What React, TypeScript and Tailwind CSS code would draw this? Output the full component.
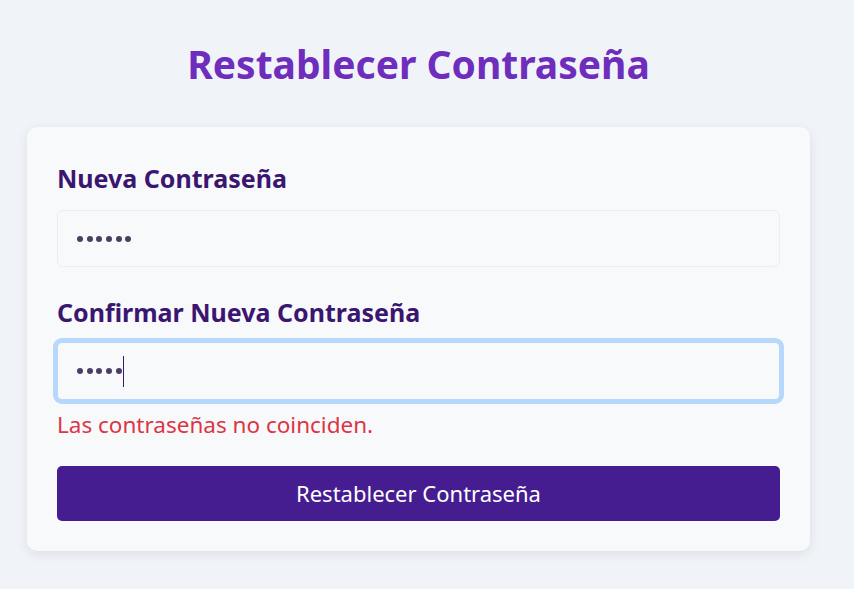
import React from "react";

const font = { fontFamily: '"Noto Sans", "Open Sans", sans-serif' };

function Dots({ count }: { count: number }) {
	return (
		<div className="flex items-center gap-[3.7px]">
			{Array.from({ length: count }).map((_, i) => (
				<span key={i} className="h-[6px] w-[6px] rounded-full bg-[#4a3f63]" />
			))}
		</div>
	);
}

export default function App() {
	return (
		<div className="min-h-screen bg-[#f0f4f8] pl-[27px] pr-[44px] pt-[36px]" style={font}>
			<h1 className="text-center text-[39px] leading-[56px] font-bold text-[#6f2dbd]">
				Restablecer Contraseña
			</h1>
			<div className="mt-[35px] rounded-[10px] bg-[#f8f9fb] px-[30px] pt-[30px] pb-[30px] shadow-[0_3px_12px_rgba(0,0,0,0.09)]">
				{/* Nueva contraseña */}
				<label className="block text-[25px] leading-[42px] font-bold text-[#3b1670]">
					Nueva Contraseña
				</label>
				<div className="mt-[11px] flex h-[57px] items-center rounded-[6px] border border-[#eceef2] bg-[#f8f9fb] px-[19px]">
					<Dots count={6} />
				</div>

				{/* Confirmar */}
				<label className="mt-[24px] block text-[25px] leading-[42px] font-bold text-[#3b1670]">
					Confirmar Nueva Contraseña
				</label>
				<div className="mt-[9px] flex h-[58px] items-center rounded-[5px] border border-[#b7d8fb] bg-[#f8f9fb] px-[19px] shadow-[0_0_0_4px_#b7d8fb]">
					<Dots count={5} />
					<span className="ml-[1px] h-[31px] w-px bg-[#3b1670]" />
				</div>

				<p className="mt-[10px] text-[22.5px] leading-[30px] text-[#dc3545]">
					Las contraseñas no coinciden.
				</p>
				<button className="mt-[26px] h-[55px] w-full rounded-[5px] bg-[#461d91] text-[22px] text-white">
					Restablecer Contraseña
				</button>
			</div>
		</div>
	);
}
